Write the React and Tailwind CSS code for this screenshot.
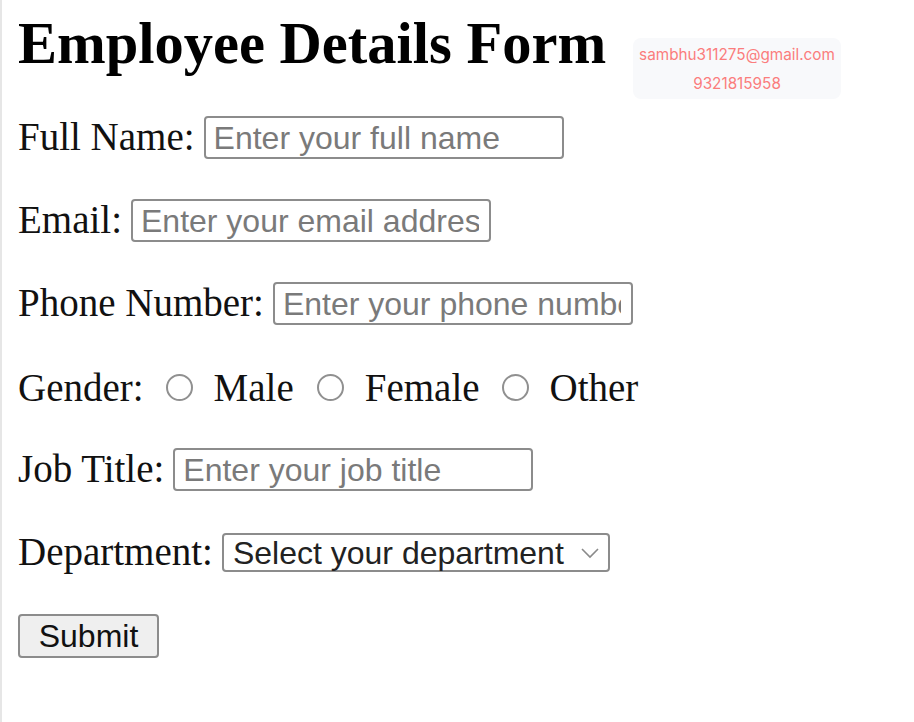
export default function App() {
  const serif = { fontFamily: '"Liberation Serif", "Times New Roman", serif' };
  const inputCls =
    "h-[43px] w-[360px] rounded-[4px] border-2 border-[#8c8c8c] bg-white pl-[8px] pr-[10px] text-[32px] text-[#222] outline-none placeholder:text-[#7a7a7a] [font-family:'Liberation_Sans',Arial,sans-serif]";
  const Radio = () => (
    <span className="inline-block h-[27px] w-[27px] shrink-0 rounded-full border-2 border-[#909090] bg-white" />
  );
  return (
    <div className="relative min-h-screen w-full border-l-2 border-[#e6e6e6] bg-white text-[#111]">
      <div className="absolute left-[631px] top-[38px] flex h-[61px] w-[208px] flex-col items-center justify-center rounded-[8px] bg-[#f8f9fb] text-[15.3px] leading-[29px] text-[#fb7d7d] [font-family:Inter,'Noto_Sans',sans-serif]">
        <span>sambhu311275@gmail.com</span>
        <span>9321815958</span>
      </div>
      <div className="flex flex-col pl-[16px] pt-[15px]" style={serif}>
        <h1 className="text-[58.5px] font-bold leading-[57px] text-black">Employee Details Form</h1>
        <div className="mt-[44px] flex flex-col gap-[40px] text-[39px]">
          <div className="flex h-[43px] items-center gap-[9px]">
            <span>Full Name:</span>
            <input className={inputCls} placeholder="Enter your full name" />
          </div>
          <div className="flex h-[43px] items-center gap-[9px]">
            <span>Email:</span>
            <input className={inputCls} placeholder="Enter your email address" />
          </div>
          <div className="flex h-[43px] items-center gap-[9px]">
            <span>Phone Number:</span>
            <input className={inputCls} placeholder="Enter your phone number" />
          </div>
          <div className="flex h-[43px] items-center pt-[4px]">
            <span>Gender:</span>
            <span className="ml-[22px]"><Radio /></span>
            <span className="ml-[21px]">Male</span>
            <span className="ml-[23px]"><Radio /></span>
            <span className="ml-[21px]">Female</span>
            <span className="ml-[22px]"><Radio /></span>
            <span className="ml-[21px]">Other</span>
          </div>
          <div className="flex h-[43px] items-center gap-[9px]">
            <span>Job Title:</span>
            <input className={inputCls} placeholder="Enter your job title" />
          </div>
          <div className="flex h-[43px] items-center gap-[9px]">
            <span>Department:</span>
            <div className="flex h-[39px] w-[388px] items-center justify-between rounded-[4px] border-2 border-[#8c8c8c] bg-white pl-[9px] pr-[8px] text-[32px] leading-none text-[#222] [font-family:'Liberation_Sans',Arial,sans-serif]">
              <span>Select your department</span>
              <svg width="20" height="12" viewBox="0 0 20 12" fill="none">
                <path d="M2 2 L10 10 L18 2" stroke="#8a8a8a" strokeWidth="1.6" />
              </svg>
            </div>
          </div>
          <div className="flex h-[44px] items-center">
            <button className="flex h-[44px] w-[141px] items-center justify-center rounded-[4px] border-2 border-[#8c8c8c] bg-[#efefef] text-[32px] leading-none text-[#111] [font-family:'Liberation_Sans',Arial,sans-serif]">
              Submit
            </button>
          </div>
        </div>
      </div>
    </div>
  );
}
